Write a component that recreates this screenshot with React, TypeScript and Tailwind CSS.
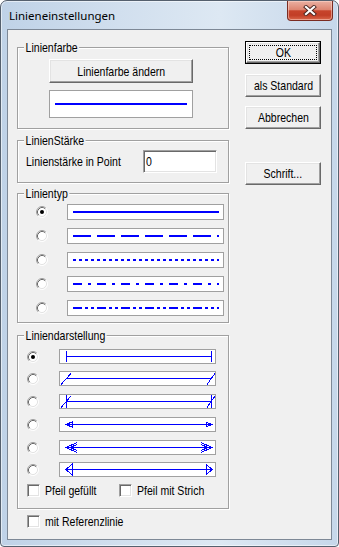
import React from "react";

const raised =
  "border border-t-white border-l-white border-r-[#696969] border-b-[#696969] bg-[#f0f0f0] shadow-[inset_-1px_-1px_0_#a0a0a0,inset_1px_1px_0_#e3e3e3]";
const sunken =
  "border border-t-[#a0a0a0] border-l-[#a0a0a0] border-r-white border-b-white bg-white shadow-[inset_1px_1px_0_#696969,inset_-1px_-1px_0_#e3e3e3]";

function T({ children, center = false, className = "" }: { children: React.ReactNode; center?: boolean; className?: string }) {
  return (
    <span
      className={
        "inline-block whitespace-nowrap scale-x-[0.81] " +
        (center ? "origin-center " : "origin-left ") +
        className
      }
    >
      {children}
    </span>
  );
}

function Radio({ checked = false }: { checked?: boolean }) {
  return (
    <svg width="12" height="12" viewBox="0 0 12 12" className="shrink-0">
      <circle cx="6" cy="6" r="5" fill="#fff" />
      <path d="M2.11 9.89 A5.5 5.5 0 0 1 9.89 2.11" stroke="#a0a0a0" fill="none" />
      <path d="M9.89 2.11 A5.5 5.5 0 0 1 2.11 9.89" stroke="#ffffff" fill="none" />
      <path d="M2.82 9.18 A4.5 4.5 0 0 1 9.18 2.82" stroke="#696969" fill="none" />
      <path d="M9.18 2.82 A4.5 4.5 0 0 1 2.82 9.18" stroke="#e3e3e3" fill="none" />
      {checked && <circle cx="6" cy="6" r="2" fill="#000" />}
    </svg>
  );
}

function Check() {
  return <div className={"h-[13px] w-[13px] shrink-0 " + sunken} />;
}

function Group({
  label,
  className,
  children,
}: {
  label: string;
  className: string;
  children: React.ReactNode;
}) {
  return (
    <div
      className={
        "relative border border-[#a0a0a0] shadow-[inset_1px_1px_0_#fff,1px_1px_0_#fff] " +
        className
      }
    >
      <span className="absolute left-[6px] top-[-8px] leading-[15px]">
        <T className="bg-[#f0f0f0] px-[2px]">{label}</T>
      </span>
      {children}
    </div>
  );
}

const lineStyles: string[] = [
  "bg-[#0000ff]",
  "bg-[repeating-linear-gradient(90deg,#0000ff_0px,#0000ff_18px,transparent_18px,transparent_24px)]",
  "bg-[repeating-linear-gradient(90deg,#0000ff_0px,#0000ff_3px,transparent_3px,transparent_6px)]",
  "bg-[repeating-linear-gradient(90deg,#0000ff_0px,#0000ff_9px,transparent_9px,transparent_15px,#0000ff_15px,#0000ff_18px,transparent_18px,transparent_24px)]",
  "bg-[repeating-linear-gradient(90deg,#0000ff_0px,#0000ff_9px,transparent_9px,transparent_12px,#0000ff_12px,#0000ff_15px,transparent_15px,transparent_18px,#0000ff_18px,#0000ff_21px,transparent_21px,transparent_24px)]",
];

const ends: string[] = [
  "M6 6.5 H152 M6.5 1 V12 M151.5 1 V12",
  "M6 6.5 H152 M1 12.5 L11 1.5 M147 12.5 L155 1.5",
  "M6 6.5 H152 M6.5 0 V13 M151.5 0 V13 M1 12.5 L11 1 M147 12.5 L155 1",
  "M6 6.5 H152 M6 6.5 L12 4 L12 9 Z M152 6.5 L146 4 L146 9 Z",
  "M6 6.5 H152 M17 1.5 L6 6.5 L17 11.5 M17 3.5 L10 6.5 L17 9.5 M141 1.5 L152 6.5 L141 11.5 M141 3.5 L148 6.5 L141 9.5",
  "M6 6.5 H152 M6 6.5 L12 1 L12 12 Z M152 6.5 L146 1 L146 12 Z",
];

const rowMargins = ["mt-0", "mt-[7px]", "mt-[8px]", "mt-[8px]", "mt-[8px]", "mt-[7px]"];

export default function App() {
  return (
    <div className="h-[547px] w-[339px] font-['Liberation_Sans',Arial,sans-serif] text-[13px] leading-[15px] text-black">
      <div className="flex h-full w-full flex-col rounded-t-[7px] rounded-b-[4px] border border-[#55606e] bg-[linear-gradient(90deg,#bfd2e7_0%,#d1dfee_35%,#dde8f3_65%,#c6d7ea_100%)] shadow-[inset_0_0_0_1px_rgba(255,255,255,0.55)]">
        {/* title bar */}
        <div className="flex h-[28px] shrink-0 items-start justify-between">
          <span className="pl-[8px] pt-[7px] font-['Noto_Sans',sans-serif] text-[11.5px] leading-[15px] text-black">
            Linieneinstellungen
          </span>
          <div className="mr-[5px] flex h-[20px] w-[46px] items-center justify-center rounded-b-[4px] border border-t-0 border-[#7a2c22] bg-[linear-gradient(180deg,#eab0a2_0%,#dd8672_45%,#c7442b_52%,#c23e26_75%,#d9674a_100%)] shadow-[inset_0_0_0_1px_rgba(255,220,210,0.5)]">
            <svg width="14" height="11" viewBox="0 0 14 11">
              <path d="M3 2 L11 9 M11 2 L3 9" stroke="#4a2520" strokeWidth="4" strokeLinecap="square" />
              <path d="M3 2 L11 9 M11 2 L3 9" stroke="#ffffff" strokeWidth="2.2" strokeLinecap="square" />
            </svg>
          </div>
        </div>

        {/* client area */}
        <div className="mx-[6px] mb-[6px] flex flex-1 border border-[#7d8896] bg-[#f0f0f0]">
          {/* left column */}
          <div className="ml-[9px] mt-[17px] flex w-[212px] flex-col">
            <Group label="Linienfarbe" className="flex flex-col items-start gap-[7px] pb-[10px] pl-[31px] pt-[11px]">
              <div className={"flex h-[24px] w-[144px] items-center justify-center " + raised}>
                <T center>Linienfarbe ändern</T>
              </div>
              <div className="flex h-[28px] w-[144px] items-center border border-[#a0a0a0] bg-white px-[5px]">
                <div className="h-[2px] w-full bg-[#0000ff]" />
              </div>
            </Group>

            <Group label="LinienStärke" className="mt-[11px] flex items-center pb-[9px] pl-[8px] pt-[9px]">
              <T>Linienstärke in Point</T>
              <div className={"ml-auto mr-[11px] flex h-[23px] w-[74px] shrink-0 items-center pl-[2px] " + sunken}>
                <T>0</T>
              </div>
            </Group>

            <Group label="Linientyp" className="mt-[10px] flex flex-col gap-[8px] pb-[6px] pl-[18px] pt-[10px]">
              {lineStyles.map((s, i) => (
                <div key={i} className="flex h-[16px] items-center">
                  <Radio checked={i === 0} />
                  <div className="ml-[19px] h-[16px] w-[157px] border border-[#a0a0a0] bg-white">
                    <div className={"ml-[5px] mt-[6px] h-[2px] w-[146px] " + s} />
                  </div>
                </div>
              ))}
            </Group>

            <Group label="Liniendarstellung" className="mt-[12px] flex flex-col pb-[11px] pl-[9px] pt-[13px]">
              {ends.map((p, i) => (
                <div key={i} className={"flex h-[15px] items-center " + rowMargins[i]}>
                  <Radio checked={i === 0} />
                  <div className="ml-[20px] h-[15px] w-[157px] border border-[#a0a0a0] bg-white">
                    <svg width="155" height="13" viewBox="0 0 155 13" shapeRendering="crispEdges" className="block">
                      <path d={p} stroke="#0000ff" strokeWidth="1" fill="none" />
                    </svg>
                  </div>
                </div>
              ))}
              <div className="mt-[7px] flex h-[13px] items-center">
                <div className="flex w-[92px] shrink-0 items-center gap-[5px]">
                  <Check />
                  <T>Pfeil gefüllt</T>
                </div>
                <div className="flex items-center gap-[5px]">
                  <Check />
                  <T>Pfeil mit Strich</T>
                </div>
              </div>
            </Group>

            <div className="ml-[10px] mt-[5px] flex items-center gap-[5px]">
              <Check />
              <T>mit Referenzlinie</T>
            </div>
          </div>

          {/* right column */}
          <div className="ml-[16px] mt-[11px] flex w-[76px] flex-col">
            <div className="h-[23px] w-[76px] border border-black">
              <div className={"relative flex h-full w-full items-center justify-center " + raised}>
                <div className="absolute inset-[2px] border border-dotted border-black" />
                <T center>OK</T>
              </div>
            </div>
            <div className={"mt-[10px] flex h-[23px] w-[76px] items-center justify-center " + raised}>
              <T center>als Standard</T>
            </div>
            <div className={"mt-[9px] flex h-[23px] w-[76px] items-center justify-center " + raised}>
              <T center>Abbrechen</T>
            </div>
            <div className={"mt-[33px] flex h-[23px] w-[76px] items-center justify-center " + raised}>
              <T center>Schrift...</T>
            </div>
          </div>
        </div>
      </div>
    </div>
  );
}
